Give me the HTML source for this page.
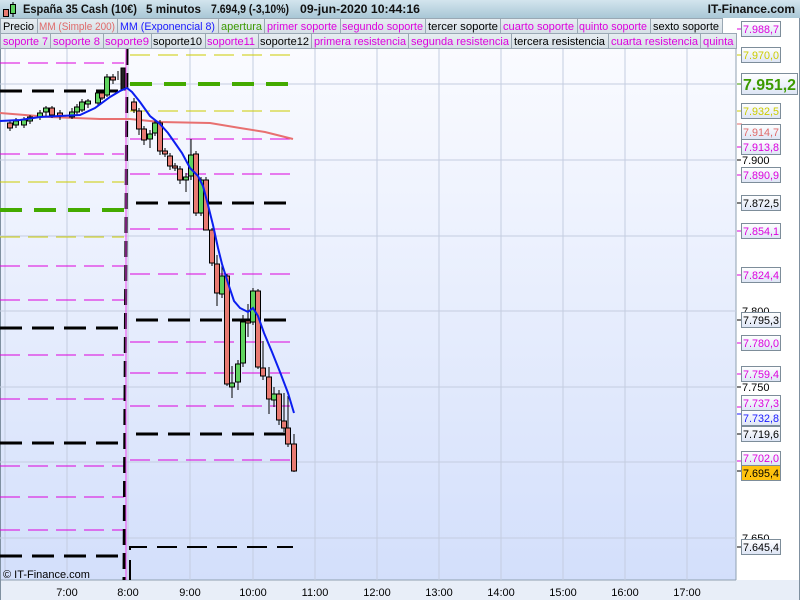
<!DOCTYPE html>
<html><head><meta charset="utf-8"><style>
html,body{margin:0;padding:0;background:#fff;}
svg{display:block;font-family:"Liberation Sans",sans-serif;}
</style></head><body>
<svg width="800" height="600" viewBox="0 0 800 600" xmlns="http://www.w3.org/2000/svg">
<defs>
<linearGradient id="bg" x1="0" y1="0" x2="0" y2="1"><stop offset="0" stop-color="#fafbff"/><stop offset="1" stop-color="#d3dffb"/></linearGradient>
<linearGradient id="tb" x1="0" y1="0" x2="0" y2="1"><stop offset="0" stop-color="#d3e5ee"/><stop offset="1" stop-color="#a9c7d6"/></linearGradient>
<linearGradient id="lb" x1="0" y1="0" x2="0" y2="1"><stop offset="0" stop-color="#ffffff"/><stop offset="1" stop-color="#dde5f5"/></linearGradient>
<linearGradient id="cell" x1="0" y1="0" x2="0" y2="1"><stop offset="0" stop-color="#e8eef2"/><stop offset="1" stop-color="#d5dfe6"/></linearGradient>
</defs>
<rect width="800" height="600" fill="#fff"/>
<rect x="0" y="49" width="736" height="531" fill="url(#bg)"/>
<rect x="0" y="580" width="800" height="20" fill="#e8eef8"/>
<line x1="736" y1="49" x2="736" y2="580" stroke="#8fa0b0"/>
<line x1="0" y1="580" x2="736" y2="580" stroke="#8fa0b0"/>
<line x1="0.5" y1="18" x2="0.5" y2="600" stroke="#7f90a0"/>
<line x1="799.5" y1="18" x2="799.5" y2="600" stroke="#7f90a0"/>
<g stroke="#c4cde0" stroke-width="1">
<line x1="5" y1="49" x2="5" y2="580"/><line x1="67" y1="49" x2="67" y2="580"/><line x1="128" y1="49" x2="128" y2="580"/><line x1="190" y1="49" x2="190" y2="580"/><line x1="253" y1="49" x2="253" y2="580"/><line x1="315" y1="49" x2="315" y2="580"/><line x1="377" y1="49" x2="377" y2="580"/><line x1="439" y1="49" x2="439" y2="580"/><line x1="501" y1="49" x2="501" y2="580"/><line x1="563" y1="49" x2="563" y2="580"/><line x1="625" y1="49" x2="625" y2="580"/><line x1="687" y1="49" x2="687" y2="580"/>
<line x1="0" y1="84" x2="736" y2="84"/><line x1="0" y1="160" x2="736" y2="160"/><line x1="0" y1="236" x2="736" y2="236"/><line x1="0" y1="311" x2="736" y2="311"/><line x1="0" y1="387" x2="736" y2="387"/><line x1="0" y1="462" x2="736" y2="462"/><line x1="0" y1="538" x2="736" y2="538"/>
</g>
<g fill="none">
<g stroke="#dd00dd" stroke-width="1" stroke-dasharray="20,8"><path d="M0 63H124M0 154H124M0 266H124M0 300H124M0 355H124M0 399H124M0 466H124M0 497H124M0 530H124"/></g>
<g stroke="#cccc00" stroke-width="1" stroke-dasharray="20,8"><path d="M0 182H124M0 237H124"/></g>
<g stroke="#000" stroke-width="3" stroke-dasharray="22,10"><path d="M0 91H120M0 328H120M0 443H120M0 556H120"/></g>
<g stroke="#44aa00" stroke-width="4" stroke-dasharray="22,12"><path d="M0 210H124"/></g>
<g stroke="#dd00dd" stroke-width="1" stroke-dasharray="20,8"><path d="M130 139H293M130 174H293M130 229H293M130 274H293M130 342H293M130 373H293M130 406H293M130 460H293"/></g>
<g stroke="#cccc00" stroke-width="1" stroke-dasharray="20,8"><path d="M130 55H293M130 111H293"/></g>
<g stroke="#000" stroke-width="3" stroke-dasharray="22,10"><path d="M136 203H293M136 320H293M136 434H293"/></g>
<path d="M130 580V547H293" stroke="#000" stroke-width="2" stroke-dasharray="20,10"/>
<g stroke="#44aa00" stroke-width="4" stroke-dasharray="22,12"><path d="M130 84H293"/></g>
<path d="M127 49L124 580" stroke="#000" stroke-width="3" stroke-dasharray="16,8"/>
<path d="M126 49L126 580" stroke="#ee44ee" stroke-width="1"/>
<path d="M0 113L50 117L100 119L130 119L160 122L210 123L240 128L265 132L293 139" stroke="#e87070" stroke-width="2"/>
</g>
<g stroke="#000" stroke-width="1">
<line x1="10" y1="120" x2="10" y2="131"/><rect x="7.5" y="123" width="5" height="5" fill="#e87a72"/>
<line x1="16" y1="118" x2="16" y2="128"/><rect x="13.5" y="121" width="5" height="4" fill="#5fd35f"/>
<line x1="24" y1="117" x2="24" y2="128"/><rect x="21.5" y="120" width="5" height="5" fill="#5fd35f"/>
<line x1="30" y1="115" x2="30" y2="124"/><rect x="27.5" y="117" width="5" height="4" fill="#5fd35f"/>
<line x1="40" y1="110" x2="40" y2="120"/><rect x="37.5" y="113" width="5" height="4" fill="#5fd35f"/>
<line x1="46" y1="106" x2="46" y2="116"/><rect x="43.5" y="108" width="5" height="4" fill="#5fd35f"/>
<line x1="52" y1="106" x2="52" y2="118"/><rect x="49.5" y="108" width="5" height="7" fill="#e87a72"/>
<line x1="60" y1="110" x2="60" y2="120"/><rect x="57.5" y="113" width="5" height="3" fill="#e87a72"/>
<line x1="72" y1="108" x2="72" y2="119"/><rect x="69.5" y="112" width="5" height="5" fill="#5fd35f"/>
<line x1="77" y1="104" x2="77" y2="115"/><rect x="74.5" y="107" width="5" height="5" fill="#5fd35f"/>
<line x1="82" y1="99" x2="82" y2="112"/><rect x="79.5" y="102" width="5" height="8" fill="#5fd35f"/>
<line x1="88" y1="99" x2="88" y2="108"/><rect x="85.5" y="101" width="5" height="3" fill="#5fd35f"/>
<line x1="98" y1="90" x2="98" y2="106"/><rect x="95.5" y="93" width="5" height="10" fill="#5fd35f"/>
<line x1="102" y1="91" x2="102" y2="100"/><rect x="99.5" y="93" width="5" height="5" fill="#e87a72"/>
<line x1="107" y1="74" x2="107" y2="97"/><rect x="104.5" y="77" width="5" height="18" fill="#5fd35f"/>
<line x1="113" y1="74" x2="113" y2="84"/><rect x="110.5" y="77" width="5" height="3" fill="#e87a72"/>
<line x1="118" y1="71" x2="118" y2="80"/>
<rect x="121" y="68" width="4" height="22" fill="#222"/>
<line x1="134" y1="98" x2="134" y2="113"/><rect x="131.5" y="102" width="5" height="8" fill="#e87a72"/>
<line x1="139" y1="108" x2="139" y2="135"/><rect x="136.5" y="111" width="5" height="18" fill="#e87a72"/>
<line x1="144" y1="126" x2="144" y2="145"/><rect x="141.5" y="129" width="5" height="11" fill="#e87a72"/>
<line x1="150" y1="130" x2="150" y2="148"/><rect x="147.5" y="134" width="5" height="5" fill="#5fd35f"/>
<line x1="155" y1="120" x2="155" y2="136"/><rect x="152.5" y="123" width="5" height="10" fill="#5fd35f"/>
<line x1="160" y1="120" x2="160" y2="155"/><rect x="157.5" y="123" width="5" height="28" fill="#e87a72"/>
<line x1="165" y1="148" x2="165" y2="157"/><rect x="162.5" y="151" width="5" height="3" fill="#e87a72"/>
<line x1="170" y1="153" x2="170" y2="170"/><rect x="167.5" y="156" width="5" height="10" fill="#e87a72"/>
<line x1="175" y1="163" x2="175" y2="171"/><rect x="172.5" y="166" width="5" height="2" fill="#e87a72"/>
<line x1="180" y1="166" x2="180" y2="184"/><rect x="177.5" y="169" width="5" height="11" fill="#e87a72"/>
<line x1="186" y1="173" x2="186" y2="192"/><rect x="183.5" y="177" width="5" height="3" fill="#5fd35f"/>
<line x1="191" y1="139" x2="191" y2="180"/><rect x="188.5" y="155" width="5" height="21" fill="#5fd35f"/>
<line x1="196" y1="151" x2="196" y2="216"/><rect x="193.5" y="154" width="5" height="59" fill="#e87a72"/>
<line x1="201" y1="177" x2="201" y2="216"/><rect x="198.5" y="180" width="5" height="33" fill="#5fd35f"/>
<line x1="206" y1="177" x2="206" y2="229"/><rect x="203.5" y="180" width="5" height="50" fill="#e87a72"/>
<line x1="212" y1="228" x2="212" y2="266"/><rect x="209.5" y="230" width="5" height="33" fill="#e87a72"/>
<line x1="217" y1="255" x2="217" y2="306"/><rect x="214.5" y="264" width="5" height="29" fill="#e87a72"/>
<line x1="222" y1="266" x2="222" y2="298"/><rect x="219.5" y="276" width="5" height="18" fill="#5fd35f"/>
<line x1="227" y1="274" x2="227" y2="386"/><rect x="224.5" y="276" width="5" height="108" fill="#e87a72"/>
<line x1="232" y1="366" x2="232" y2="398"/><rect x="229.5" y="383" width="5" height="4" fill="#5fd35f"/>
<line x1="238" y1="360" x2="238" y2="390"/><rect x="235.5" y="364" width="5" height="18" fill="#5fd35f"/>
<line x1="243" y1="315" x2="243" y2="367"/><rect x="240.5" y="322" width="5" height="41" fill="#5fd35f"/>
<line x1="248" y1="304" x2="248" y2="337"/><rect x="245.5" y="321" width="5" height="2" fill="#e87a72"/>
<line x1="253" y1="288" x2="253" y2="325"/><rect x="250.5" y="291" width="5" height="31" fill="#5fd35f"/>
<line x1="258" y1="289" x2="258" y2="369"/><rect x="255.5" y="291" width="5" height="76" fill="#e87a72"/>
<line x1="263" y1="341" x2="263" y2="380"/><rect x="260.5" y="368" width="5" height="8" fill="#e87a72"/>
<line x1="269" y1="367" x2="269" y2="414"/><rect x="266.5" y="377" width="5" height="22" fill="#e87a72"/>
<line x1="274" y1="387" x2="274" y2="407"/><rect x="271.5" y="394" width="5" height="6" fill="#5fd35f"/>
<line x1="279" y1="390" x2="279" y2="425"/><rect x="276.5" y="394" width="5" height="26" fill="#e87a72"/>
<line x1="284" y1="393" x2="284" y2="432"/><rect x="281.5" y="421" width="5" height="7" fill="#e87a72"/>
<line x1="288" y1="396" x2="288" y2="447"/><rect x="285.5" y="428" width="5" height="16" fill="#e87a72"/>
<line x1="294" y1="434" x2="294" y2="472"/><rect x="291.5" y="444" width="5" height="27" fill="#e87a72"/>
</g>
<path d="M0 121L20 120L40 117L60 116L80 115L95 108L110 97L120 91L127 88L132 92L140 102L150 116L160 124L168 133L175 143L182 153L190 168L198 176L203 186L208 205L213 225L218 248L222 264L228 283L234 301L240 308L248 312L253 308L258 316L264 333L272 352L280 372L288 393L294 413" fill="none" stroke="#0b1ef0" stroke-width="2"/>
<text x="3" y="578" font-size="11" fill="#000">© IT-Finance.com</text>
<g font-size="11" fill="#000" text-anchor="middle">
<text x="67" y="596">7:00</text><text x="128" y="596">8:00</text><text x="190" y="596">9:00</text><text x="253" y="596">10:00</text><text x="315" y="596">11:00</text><text x="377" y="596">12:00</text><text x="439" y="596">13:00</text><text x="501" y="596">14:00</text><text x="563" y="596">15:00</text><text x="625" y="596">16:00</text><text x="687" y="596">17:00</text>
</g>
<rect x="0" y="0" width="800" height="18" fill="url(#tb)"/>
<rect x="3.5" y="9.5" width="5" height="7" fill="#e87a72" stroke="#000"/>
<line x1="13" y1="2" x2="13" y2="17" stroke="#000"/>
<rect x="10.5" y="4.5" width="5" height="9" fill="#5fd35f" stroke="#000"/>
<g font-size="12" font-weight="bold" fill="#111">
<text x="23" y="13" textLength="114" lengthAdjust="spacingAndGlyphs">España 35 Cash (10€)</text>
<text x="146" y="13" textLength="55" lengthAdjust="spacingAndGlyphs">5 minutos</text>
<text x="211" y="13" textLength="78" lengthAdjust="spacingAndGlyphs">7.694,9 (-3,10%)</text>
<text x="300" y="13" textLength="120" lengthAdjust="spacingAndGlyphs">09-jun-2020 10:44:16</text>
<text x="795" y="13" text-anchor="end">IT-Finance.com</text>
</g>
<g font-size="11">
<g stroke="#9aa8b4" fill="url(#cell)">
<rect x="0.5" y="18.5" width="37" height="15"/><rect x="37.5" y="18.5" width="80" height="15"/><rect x="117.5" y="18.5" width="101" height="15"/><rect x="218.5" y="18.5" width="46" height="15"/><rect x="264.5" y="18.5" width="76" height="15"/><rect x="340.5" y="18.5" width="85" height="15"/><rect x="425.5" y="18.5" width="75" height="15"/><rect x="500.5" y="18.5" width="77" height="15"/><rect x="577.5" y="18.5" width="73" height="15"/><rect x="650.5" y="18.5" width="72" height="15"/>
<rect x="0.5" y="33.5" width="50" height="15"/><rect x="50.5" y="33.5" width="53" height="15"/><rect x="103.5" y="33.5" width="48" height="15"/><rect x="151.5" y="33.5" width="54" height="15"/><rect x="205.5" y="33.5" width="53" height="15"/><rect x="258.5" y="33.5" width="53" height="15"/><rect x="311.5" y="33.5" width="97" height="15"/><rect x="408.5" y="33.5" width="103" height="15"/><rect x="511.5" y="33.5" width="97" height="15"/><rect x="608.5" y="33.5" width="92" height="15"/><rect x="700.5" y="33.5" width="36" height="15"/>
</g>
<g lengthAdjust="spacingAndGlyphs">
<text x="3" y="30" fill="#000" textLength="31">Precio</text>
<text x="39" y="30" fill="#e06a6a" textLength="76" lengthAdjust="spacingAndGlyphs">MM (Simple 200)</text>
<text x="120" y="30" fill="#1a1aff" textLength="95" lengthAdjust="spacingAndGlyphs">MM (Exponencial 8)</text>
<text x="221" y="30" fill="#3c9a00" textLength="41" lengthAdjust="spacingAndGlyphs">apertura</text>
<text x="267" y="30" fill="#dd00dd" textLength="70" lengthAdjust="spacingAndGlyphs">primer soporte</text>
<text x="342" y="30" fill="#dd00dd" textLength="81" lengthAdjust="spacingAndGlyphs">segundo soporte</text>
<text x="428" y="30" fill="#000" textLength="70" lengthAdjust="spacingAndGlyphs">tercer soporte</text>
<text x="503" y="30" fill="#dd00dd" textLength="71" lengthAdjust="spacingAndGlyphs">cuarto soporte</text>
<text x="579" y="30" fill="#dd00dd" textLength="68" lengthAdjust="spacingAndGlyphs">quinto soporte</text>
<text x="653" y="30" fill="#000" textLength="66" lengthAdjust="spacingAndGlyphs">sexto soporte</text>
<text x="3" y="45" fill="#dd00dd" textLength="45" lengthAdjust="spacingAndGlyphs">soporte 7</text>
<text x="53" y="45" fill="#dd00dd" textLength="47" lengthAdjust="spacingAndGlyphs">soporte 8</text>
<text x="105" y="45" fill="#dd00dd" textLength="44" lengthAdjust="spacingAndGlyphs">soporte9</text>
<text x="153" y="45" fill="#000" textLength="49" lengthAdjust="spacingAndGlyphs">soporte10</text>
<text x="207" y="45" fill="#dd00dd" textLength="48" lengthAdjust="spacingAndGlyphs">soporte11</text>
<text x="260" y="45" fill="#000" textLength="49" lengthAdjust="spacingAndGlyphs">soporte12</text>
<text x="314" y="45" fill="#dd00dd" textLength="92" lengthAdjust="spacingAndGlyphs">primera resistencia</text>
<text x="411" y="45" fill="#dd00dd" textLength="98" lengthAdjust="spacingAndGlyphs">segunda resistencia</text>
<text x="514" y="45" fill="#000" textLength="91" lengthAdjust="spacingAndGlyphs">tercera resistencia</text>
<text x="611" y="45" fill="#dd00dd" textLength="87" lengthAdjust="spacingAndGlyphs">cuarta resistencia</text>
</g>
<svg x="700" y="33" width="36" height="16"><text x="3" y="12" fill="#dd00dd" font-size="11" textLength="87" lengthAdjust="spacingAndGlyphs">quinta resistencia</text></svg>
</g>
<g font-size="11">
<g fill="#000"><text x="742" y="164">7.900</text><text x="742" y="315">7.800</text><text x="742" y="391">7.750</text><text x="742" y="542">7.650</text><text x="742" y="239">7.850</text></g>
<g stroke="#000"><line x1="737" y1="160" x2="741" y2="160"/><line x1="737" y1="387" x2="741" y2="387"/></g>
</g>
<g font-size="11">
<line x1="737" y1="29" x2="742" y2="29" stroke="#dd00dd"/><rect x="741.5" y="21.5" width="39" height="15" fill="url(#lb)" stroke="#7d8d9a"/><text x="743" y="33" fill="#dd00dd" textLength="36" lengthAdjust="spacingAndGlyphs">7.988,7</text>
<line x1="737" y1="55" x2="742" y2="55" stroke="#cccc00"/><rect x="741.5" y="47.5" width="39" height="15" fill="url(#lb)" stroke="#7d8d9a"/><text x="743" y="59" fill="#cccc00" textLength="36" lengthAdjust="spacingAndGlyphs">7.970,0</text>
<line x1="737" y1="84" x2="742" y2="84" stroke="#3c9a00"/><rect x="741.5" y="73.5" width="56" height="21" fill="url(#lb)" stroke="#7d8d9a"/><text x="743" y="90" fill="#3c9a00" font-size="16" font-weight="bold" textLength="53" lengthAdjust="spacingAndGlyphs">7.951,2</text>
<line x1="737" y1="111" x2="742" y2="111" stroke="#cccc00"/><rect x="741.5" y="103.5" width="39" height="15" fill="url(#lb)" stroke="#7d8d9a"/><text x="743" y="115" fill="#cccc00" textLength="36" lengthAdjust="spacingAndGlyphs">7.932,5</text>
<line x1="737" y1="124" x2="742" y2="124" stroke="#e06a6a"/><rect x="741.5" y="124.5" width="39" height="15" fill="url(#lb)" stroke="#7d8d9a"/><text x="743" y="136" fill="#e06a6a" textLength="36" lengthAdjust="spacingAndGlyphs">7.914,7</text>
<line x1="737" y1="147" x2="742" y2="147" stroke="#dd00dd"/><rect x="741.5" y="139.5" width="39" height="15" fill="url(#lb)" stroke="#7d8d9a"/><text x="743" y="151" fill="#dd00dd" textLength="36" lengthAdjust="spacingAndGlyphs">7.913,8</text>
<line x1="737" y1="175" x2="742" y2="175" stroke="#dd00dd"/><rect x="741.5" y="167.5" width="39" height="15" fill="url(#lb)" stroke="#7d8d9a"/><text x="743" y="179" fill="#dd00dd" textLength="36" lengthAdjust="spacingAndGlyphs">7.890,9</text>
<line x1="737" y1="203" x2="742" y2="203" stroke="#000"/><rect x="741.5" y="195.5" width="39" height="15" fill="url(#lb)" stroke="#7d8d9a"/><text x="743" y="207" fill="#000" textLength="36" lengthAdjust="spacingAndGlyphs">7.872,5</text>
<line x1="737" y1="231" x2="742" y2="231" stroke="#dd00dd"/><rect x="741.5" y="223.5" width="39" height="15" fill="url(#lb)" stroke="#7d8d9a"/><text x="743" y="235" fill="#dd00dd" textLength="36" lengthAdjust="spacingAndGlyphs">7.854,1</text>
<line x1="737" y1="275" x2="742" y2="275" stroke="#dd00dd"/><rect x="741.5" y="267.5" width="39" height="15" fill="url(#lb)" stroke="#7d8d9a"/><text x="743" y="279" fill="#dd00dd" textLength="36" lengthAdjust="spacingAndGlyphs">7.824,4</text>
<line x1="737" y1="320" x2="742" y2="320" stroke="#000"/><rect x="741.5" y="312.5" width="39" height="15" fill="url(#lb)" stroke="#7d8d9a"/><text x="743" y="324" fill="#000" textLength="36" lengthAdjust="spacingAndGlyphs">7.795,3</text>
<line x1="737" y1="343" x2="742" y2="343" stroke="#dd00dd"/><rect x="741.5" y="335.5" width="39" height="15" fill="url(#lb)" stroke="#7d8d9a"/><text x="743" y="347" fill="#dd00dd" textLength="36" lengthAdjust="spacingAndGlyphs">7.780,0</text>
<line x1="737" y1="374" x2="742" y2="374" stroke="#dd00dd"/><rect x="741.5" y="366.5" width="39" height="15" fill="url(#lb)" stroke="#7d8d9a"/><text x="743" y="378" fill="#dd00dd" textLength="36" lengthAdjust="spacingAndGlyphs">7.759,4</text>
<line x1="737" y1="407" x2="742" y2="407" stroke="#dd00dd"/><rect x="741.5" y="395.5" width="39" height="15" fill="url(#lb)" stroke="#7d8d9a"/><text x="743" y="407" fill="#dd00dd" textLength="36" lengthAdjust="spacingAndGlyphs">7.737,3</text>
<line x1="737" y1="414" x2="742" y2="414" stroke="#1a1aff"/><rect x="741.5" y="410.5" width="39" height="15" fill="url(#lb)" stroke="#7d8d9a"/><text x="743" y="422" fill="#1a1aff" textLength="36" lengthAdjust="spacingAndGlyphs">7.732,8</text>
<line x1="737" y1="434" x2="742" y2="434" stroke="#000"/><rect x="741.5" y="426.5" width="39" height="15" fill="url(#lb)" stroke="#7d8d9a"/><text x="743" y="438" fill="#000" textLength="36" lengthAdjust="spacingAndGlyphs">7.719,6</text>
<line x1="737" y1="461" x2="742" y2="461" stroke="#dd00dd"/><rect x="741.5" y="451.5" width="39" height="14" fill="url(#lb)" stroke="#7d8d9a"/><text x="743" y="462" fill="#dd00dd" textLength="36" lengthAdjust="spacingAndGlyphs">7.702,0</text>
<line x1="737" y1="471" x2="742" y2="471" stroke="#000"/><rect x="741.5" y="465.5" width="39" height="15" fill="#ffc20e" stroke="#7d8d9a"/><text x="743" y="477" fill="#000" textLength="36" lengthAdjust="spacingAndGlyphs">7.695,4</text>
<line x1="737" y1="547" x2="742" y2="547" stroke="#000"/><rect x="741.5" y="539.5" width="39" height="15" fill="url(#lb)" stroke="#7d8d9a"/><text x="743" y="551" fill="#000" textLength="36" lengthAdjust="spacingAndGlyphs">7.645,4</text>
</g>
</svg>
</body></html>
